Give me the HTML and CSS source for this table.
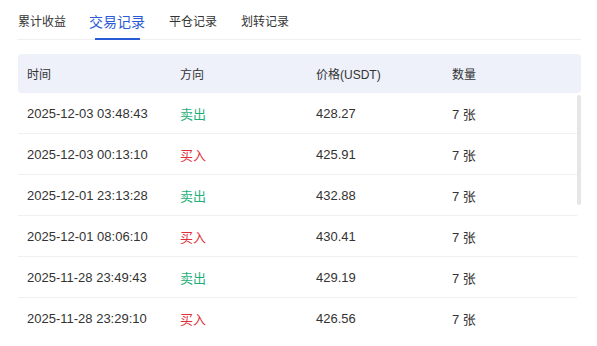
FILE: index.html
```html
<!DOCTYPE html>
<html lang="zh">
<head>
<meta charset="utf-8">
<link rel="stylesheet" href="styles.css">
</head>
<body>
<div class="page">
  <div class="tabs">
    <div class="tab">累计收益</div>
    <div class="tab active">交易记录</div>
    <div class="tab">平仓记录</div>
    <div class="tab">划转记录</div>
  </div>
  <div class="table">
    <div class="row head">
      <div>时间</div><div>方向</div><div>价格(USDT)</div><div>数量</div>
    </div>
    <div class="body">
      <div class="row"><div>2025-12-03 03:48:43</div><div class="sell">卖出</div><div>428.27</div><div>7 张</div></div>
      <div class="row"><div>2025-12-03 00:13:10</div><div class="buy">买入</div><div>425.91</div><div>7 张</div></div>
      <div class="row"><div>2025-12-01 23:13:28</div><div class="sell">卖出</div><div>432.88</div><div>7 张</div></div>
      <div class="row"><div>2025-12-01 08:06:10</div><div class="buy">买入</div><div>430.41</div><div>7 张</div></div>
      <div class="row"><div>2025-11-28 23:49:43</div><div class="sell">卖出</div><div>429.19</div><div>7 张</div></div>
      <div class="row last"><div>2025-11-28 23:29:10</div><div class="buy">买入</div><div>426.56</div><div>7 张</div></div>
      <div class="thumb"></div>
    </div>
  </div>
</div>
</body>
</html>
```
FILE: styles.css
```css
html, body {
  margin: 0;
  background: #fff;
  overflow: hidden;
}
body {
  font-family: "Liberation Sans", "Noto Sans CJK SC", sans-serif;
  color: #333;
}
.page {
  width: 563px;
  margin-left: 18px;
}
.tabs {
  display: flex;
  align-items: center;
  gap: 24px;
  height: 39px;
  border-bottom: 1px solid #f0f0f2;
  margin-left: -1px;
  padding-left: 1px;
}
.tab {
  font-size: 12px;
  color: #333;
  height: 39px;
  line-height: 42px;
  position: relative;
  font-family: "Noto Sans CJK SC", sans-serif;
}
.tab.active {
  font-size: 14px;
  color: #2a5bd7;
  margin-left: -1px;
}
.tab.active::after {
  content: "";
  position: absolute;
  left: 6px;
  right: 5px;
  bottom: -1px;
  height: 2px;
  background: #2a5bd7;
}
.table {
  margin-top: 14px;
}
.row {
  display: grid;
  grid-template-columns: 153px 136px 136px 1fr;
  padding-left: 9px;
  align-items: center;
  height: 40px;
  font-size: 13px;
  border-bottom: 1px solid #f0f0f2;
}
.row.last {
  border-bottom-color: transparent;
}
.head {
  background: #eef0fa;
  border-radius: 4px;
  border-bottom: none;
  height: 39px;
  font-size: 12px;
  color: #333;
}
.body {
  position: relative;
  margin-right: 4px;
}
.sell { color: #1eb07a; font-family: "Noto Sans CJK SC", sans-serif; }
.buy { color: #e0313b; font-family: "Noto Sans CJK SC", sans-serif; }
.thumb {
  position: absolute;
  right: -4px;
  top: 2px;
  width: 4px;
  height: 110px;
  border-radius: 2px;
  background: #e6e6e8;
}
```
